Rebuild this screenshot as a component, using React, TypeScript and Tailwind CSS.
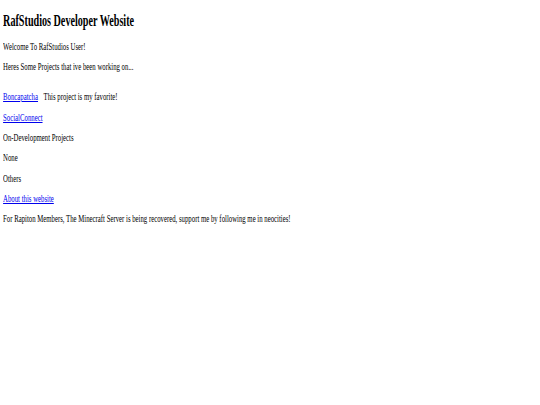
export default function App() {
  return (
    <div className="min-h-screen bg-white text-black" style={{ fontFamily: '"Liberation Serif", "Times New Roman", serif' }}>
      <div className="origin-top-left scale-x-[0.615] pl-[5px] pt-[10.5px] flex flex-col text-[11px] leading-[12.5px]">
        <h2 className="text-[16.5px] leading-[19px] font-bold">RafStudios Developer Website</h2>
        <p className="mt-[10.3px]">Welcome To RafStudios User!</p>
        <p className="mt-[7.8px]">Heres Some Projects that ive been working on...</p>
        <p className="mt-[17.8px]">
          <a href="#" className="text-[#0000ee] underline">Boncapatcha</a>
          <span className="ml-[9px]">This project is my favorite!</span>
        </p>
        <p className="mt-[7.8px]">
          <a href="#" className="text-[#0000ee] underline">SocialConnect</a>
        </p>
        <p className="mt-[7.8px]">On-Development Projects</p>
        <p className="mt-[7.8px]">None</p>
        <p className="mt-[7.8px]">Others</p>
        <p className="mt-[7.8px]">
          <a href="#" className="text-[#0000ee] underline">About this website</a>
        </p>
        <p className="mt-[7.8px]">For Rapiton Members, The Minecraft Server is being recovered, support me by following me in neocities!</p>
      </div>
    </div>
  );
}
